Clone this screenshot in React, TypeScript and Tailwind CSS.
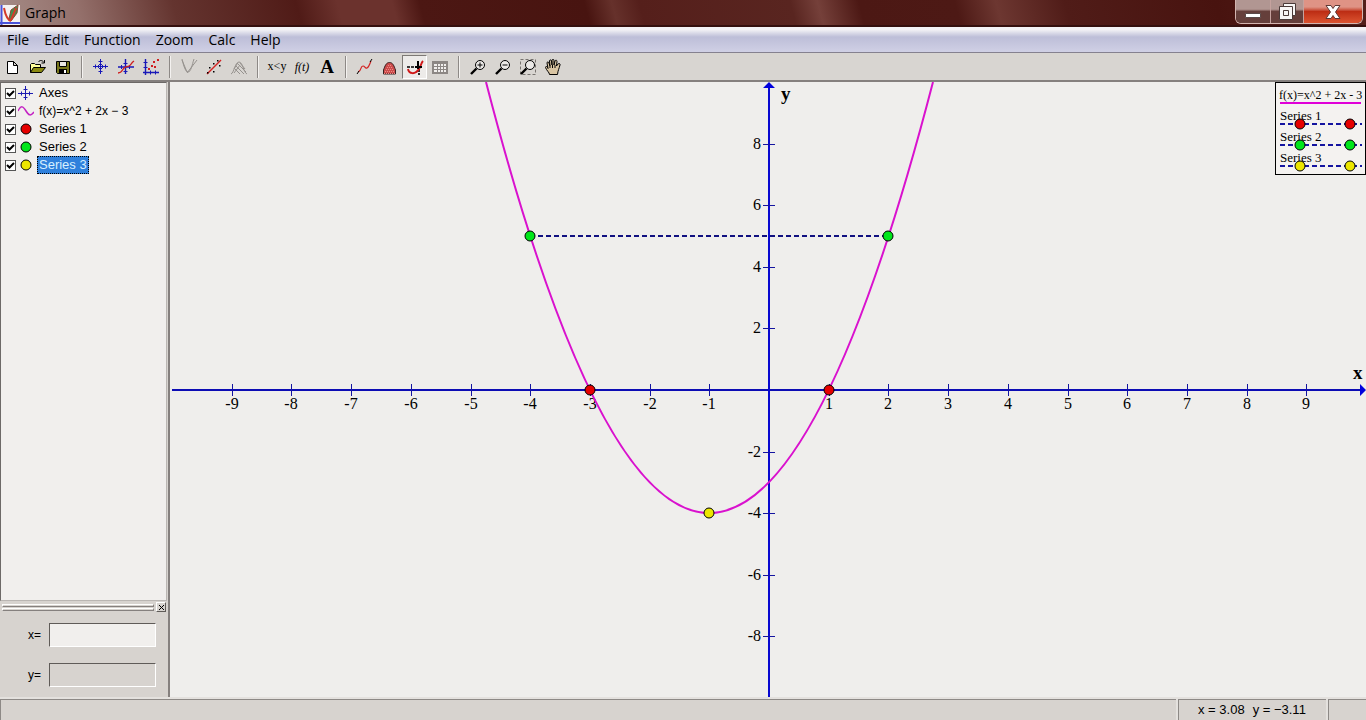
import type { ReactNode } from "react";

const MENUS = ["File", "Edit", "Function", "Zoom", "Calc", "Help"];

const POINT_COLORS = ["#e60000", "#00e61a", "#ece600"];

// ---- plot coordinates ----
const px = (x: number) => Math.round(598 + x * 59.7);
const py = (y: number) => Math.round(308 - y * 30.8);

const X_TICKS = [-9, -8, -7, -6, -5, -4, -3, -2, -1, 1, 2, 3, 4, 5, 6, 7, 8, 9];
const Y_TICKS = [-8, -6, -4, -2, 2, 4, 6, 8];

function Icon({ children }: { children: ReactNode }) {
  return (
    <svg width="18" height="18" viewBox="0 0 18 18" fill="none" stroke="black" className="overflow-visible" aria-hidden="true">
      {children}
    </svg>
  );
}

function Tool({ label, pressed, children }: { label: string; pressed?: boolean; children: ReactNode }) {
  return (
    <button
      aria-label={label}
      aria-pressed={pressed}
      className={
        pressed
          ? "flex h-6 w-[25px] items-center justify-center border border-t-[#7d7975] border-l-[#7d7975] border-r-white border-b-white bg-[#edebe9]"
          : "flex h-6 w-[25px] items-center justify-center"
      }
    >
      <Icon>{children}</Icon>
    </button>
  );
}

function Separator() {
  return (
    <div className="flex h-[22px] w-[13px] justify-center">
      <div className="w-0.5 border-l border-r border-l-[#8d8986] border-r-[#f4f2f0]" />
    </div>
  );
}

function Magnifier() {
  return (
    <>
      <circle cx="11" cy="7" r="4.5" fill="#eceae8" />
      <path d="M7.5 10.5 2 16" strokeWidth="2.4" />
    </>
  );
}

function Toolbar() {
  return (
    <div role="toolbar" className="flex h-[29px] items-center border-b-2 border-[#85807e] bg-[#d8d5d1]">
      <Tool label="New">
        <path d="M3.5 3.5h6l4 4v8h-10z M9.5 3.5v4h4" fill="white" />
      </Tool>
      <Tool label="Open">
        <path d="M1.5 14.5v-8l1-1h3l1 1h5v3" fill="#ffff9a" />
        <path d="M1.5 14.5l3-5h12l-4 5z" fill="#8b8a12" />
        <path d="M9.5 4c1-2 4-2 5.5.5M15.5 2v3h-3" />
      </Tool>
      <Tool label="Save">
        <path d="M2.5 3.5h13v12h-12l-1-1z" fill="#77761b" />
        <path d="M5.5 3.5h7v5h-7z" fill="#e9e7e4" />
        <path d="M5 11h8v4.500H5z" fill="black" stroke="none" />
        <path d="M10 12h2v3h-2z" fill="white" stroke="none" />
      </Tool>
      <Separator />
      <Tool label="Edit axes">
        <g stroke="#1818b8">
          <path d="M8.5 1v15M1 8.5h15" />
          <path d="M6.500 3.5h4M6.500 13.5h4M3.5 6.500v4M13.5 6.500v4M7 6.500h3M7 10.500h3M6.500 7v3M10.500 7v3" />
        </g>
      </Tool>
      <Tool label="Insert function">
        <g stroke="#1818b8">
          <path d="M8.5 1v15M1 9h16" strokeWidth="1.4" />
          <path d="M4.5 7v4M12.5 7v4M6.5 5.5h4M6.5 13.5h4" />
        </g>
        <path d="M1 15c4 0 4-3 6-5s3-1 5-2 2-3 5-5" stroke="#cf1e1e" strokeWidth="1.3" />
      </Tool>
      <Tool label="Insert point series">
        <path d="M3.500 1v16M1 14.500h16" stroke="#1818b8" strokeWidth="1.400" />
        <path d="M1.500 4.500h4M1.500 9.500h4M8.500 12.500v4M13.500 12.500v4" stroke="#1818b8" />
        <path d="M6 10h2v2H6zM9 7h2v2H9zM12 8h2v2h-2zM11 3h2v2h-2zM15 1h2v2h-2z" fill="#cf1e1e" stroke="none" />
      </Tool>
      <Separator />
      <Tool label="Insert tangent">
        <path d="M2 1c1 4 3 13 6 13s4-7 6-13M7 15 17 2M2 2l5 12" stroke="#96928e" />
      </Tool>
      <Tool label="Insert trendline">
        <path d="M2 16 16 2" stroke="#d32222" strokeWidth="1.4" />
        <path d="M4 9h1.500v1.500H4zM8 5h1.500v1.500H8zM12 2h1.500v1.500H12zM8 13h1.500v1.500H8zM14 7h1.500v1.500H14zM2 14h1.500v1.500H2z" fill="black" stroke="none" />
      </Tool>
      <Tool label="Insert shading">
        <path d="M1 16c3-1 4-12 8-12s4 10 8 12M6 8l8 8M7 5l9 9M5 11l5 5M10 5l5 6M7 6l-3 5M10 7l-6 8" stroke="#96928e" />
      </Tool>
      <Separator />
      <Tool label="Insert relation">
        <text x="9" y="12" textAnchor="middle" className="fill-black stroke-none font-['Liberation_Serif',serif] text-[12px]">x&lt;y</text>
      </Tool>
      <Tool label="Insert parametric function">
        <text x="9" y="13" textAnchor="middle" className="fill-black stroke-none font-['Liberation_Serif',serif] text-[12px] italic">f(t)</text>
      </Tool>
      <Tool label="Insert label">
        <text x="9" y="15" textAnchor="middle" className="fill-black stroke-none font-['Liberation_Serif',serif] text-[19px] leading-4 font-bold">A</text>
      </Tool>
      <Separator />
      <Tool label="Path length">
        <path d="M2 14c4-1 2-6 5-6 2 0 2 3 4 2s3-5 4-7" stroke="#d32222" strokeWidth="1.200" />
        <path d="M1 16l2-3M14 4l2-3" />
      </Tool>
      <Tool label="Area">
        <path d="M2.5 16V12C4 8 5 4.500 8.500 4.500S13 8 14.500 12v4z" fill="#cc4b4b" stroke="#352020" />
        <path d="M3 15.500h11M4 13.500h10M5 11.500h8M6 9.500h6M7 7.500h4" stroke="#ec8b84" strokeDasharray="1 1" />
      </Tool>
      <Tool label="Evaluate" pressed>
        <path d="M1 9h9M13 11v6" strokeWidth="1.600" strokeDasharray="3 1" />
        <path d="M2 11c1 5 7 6 11 0 2-3 2-6 4-8" stroke="#d01818" strokeWidth="2" />
        <path d="M12 3v8M9 9h7" strokeWidth="2" />
      </Tool>
      <Tool label="Table">
        <path d="M1 3h16v13H1z" fill="#8c8784" stroke="none" />
        <path d="M3 6h3v2H3zM7 6h2v2H7zM10 6h2v2h-2zM13 6h2v2h-2zM3 9h3v2H3zM7 9h2v2H7zM10 9h2v2h-2zM13 9h2v2h-2zM3 12h3v2H3zM7 12h2v2H7zM10 12h2v2h-2zM13 12h2v2h-2z" fill="#f1efed" stroke="none" />
      </Tool>
      <Separator />
      <Tool label="Zoom in">
        <Magnifier />
        <path d="M8.500 7h5M11 4.500v5" />
      </Tool>
      <Tool label="Zoom out">
        <Magnifier />
        <path d="M8.500 7h5" />
      </Tool>
      <Tool label="Zoom window">
        <path d="M1.500 1.500h15v15h-15z" stroke="#77736f" strokeDasharray="3 2" />
        <Magnifier />
      </Tool>
      <Tool label="Move">
        <path
          d="M5.500 16.500c0-2-3-4-4-7 0-1.500 1.500-1.500 2.500 1L3 5c0-1.500 1.500-1.500 2 0l1 3-.5-5c0-1.500 2-1.500 2 0L8 7V2.500c0-1.500 2-1.500 2 0V7l1-4c.5-1.300 2-1 2 .5L12.500 8 14 6c1-1 2.500-.5 2 1-1 4-2 5-2.500 9.500z"
          fill="#d9c5a3"
        />
        <path d="M6 8v2M8.500 7v3M11 7v3" />
      </Tool>
    </div>
  );
}

function TitleBar() {
  return (
    <header className="flex h-[27px] items-start justify-between border-b-2 border-[#35100e] bg-[linear-gradient(75deg,#a58c87_0%,#94706b_6%,#64342f_13%,#501b17_22%,#6b322d_25%,#6b322d_29%,#4c1713_31%,#481410_43%,#66312b_45%,#551f1b_47%,#592520_58%,#75403a_60%,#4c1814_63%,#4d1915_70%,#6d3731_73%,#501c18_78%,#48130f_89%,#54201b_100%)] pr-[3px]">
      <div className="flex items-center gap-[5px]">
        <svg width="20" height="23" viewBox="0 0 20 23" aria-hidden="true">
          <path d="M0 3h20v20H0z" fill="#f5f2f1" />
          <path d="M1.500 3v20M0 21h20" stroke="#4a52d8" strokeWidth="2" />
          <path d="M9 17 11 8l7-5-1 8-6 8z" fill="#3d9150" stroke="#8b4432" />
          <path d="M11 18 16 6M4 6c1 5 3 12 7 13" stroke="#d43a2b" strokeWidth="2" fill="none" />
        </svg>
        <h1 className="text-[14px] leading-[26px] text-black">Graph</h1>
      </div>
      <div className="flex h-6 overflow-hidden rounded-b-md border border-t-0 border-[#d3b5b0]">
        <button aria-label="Minimize" className="flex w-[35px] items-center justify-center border-r border-[#c5a29e] bg-linear-to-b from-[#b19692] from-40% to-[#653f3b] to-50%">
          <svg width="18" height="18" viewBox="0 0 18 18">
            <path d="M1.500 10.500h15v4h-15z" fill="white" stroke="#5a4a49" />
          </svg>
        </button>
        <button aria-label="Restore" className="flex w-[33px] items-center justify-center border-r border-[#c5a29e] bg-linear-to-b from-[#b19692] from-40% to-[#653f3b] to-50%">
          <svg width="18" height="18" viewBox="0 0 18 18" fill="#f7f5f5" stroke="#4a3a39">
            <path d="M5.500.5h12v12h-12z" />
            <path fillRule="evenodd" d="M1.500 3.500h13v13h-13zM5.500 7.500v5h5v-5z" />
          </svg>
        </button>
        <button aria-label="Close" className="flex w-[58px] items-center justify-center bg-linear-to-b from-[#df9385] from-30% via-[#bd2d14] via-50% to-[#dc5330]">
          <svg width="18" height="16" viewBox="0 0 18 16">
            <path d="M2 1.500h5L9 4.500l2-3h5L11.500 8l4.500 6.500h-5L9 11.500l-2 3H2L6.500 8z" fill="white" stroke="#5d3935" />
          </svg>
        </button>
      </div>
    </header>
  );
}

function AxesIcon() {
  return (
    <svg width="16" height="16" viewBox="0 0 16 16" stroke="#1c1cb0" fill="none">
      <path d="M7.500 1v14M0 8.500h15" />
      <path d="M5.500 4.500h4M5.500 12.500h4M3.500 6.500v4M11.500 6.500v4" />
    </svg>
  );
}

function CurveIcon() {
  return (
    <svg width="16" height="16" viewBox="0 0 16 16">
      <path d="M0 8C3 2 5 3 8 8s5 5 8 1" stroke="#c321c3" strokeWidth="1.500" fill="none" />
    </svg>
  );
}

function PointIcon({ color }: { color: string }) {
  return (
    <svg width="16" height="16" viewBox="0 0 16 16">
      <circle cx="8" cy="8" r="5" fill={color} stroke="black" />
    </svg>
  );
}

const ITEMS = [
  { label: "Axes", icon: <AxesIcon /> },
  { label: "f(x)=x^2 + 2x − 3", icon: <CurveIcon />, small: true },
  { label: "Series 1", icon: <PointIcon color={POINT_COLORS[0]} /> },
  { label: "Series 2", icon: <PointIcon color={POINT_COLORS[1]} /> },
  { label: "Series 3", icon: <PointIcon color={POINT_COLORS[2]} />, selected: true },
];

function Sidebar() {
  return (
    <aside className="flex w-[170px] shrink-0 flex-col border-r-2 border-[#85807e] bg-[#d7d3cf] font-['Liberation_Sans',Arial,sans-serif] text-[13px]">
      <ul className="mr-px flex-1 border border-t-[#6d6967] border-l-[#6d6967] border-r-[#bab6b3] border-b-[#bab6b3] bg-[#f1efed] pt-px">
        {ITEMS.map((item) => (
          <li key={item.label} className={item.small ? "text-[12px]" : undefined}>
            <label className="flex h-[18px] items-center pl-1">
              <span className="grid size-[11px] place-items-center">
                <input type="checkbox" defaultChecked className="peer col-start-1 row-start-1 size-[11px] appearance-none border border-[#555] bg-white" />
                <svg className="pointer-events-none invisible col-start-1 row-start-1 peer-checked:visible" width="9" height="9" viewBox="0 0 9 9">
                  <path d="M1 4 3.500 6.500 8 2" stroke="black" strokeWidth="2" fill="none" />
                </svg>
              </span>
              <span className="ml-0.5">{item.icon}</span>
              <span
                className={
                  item.selected
                    ? "ml-[3px] border border-dotted border-black bg-[#2f80dc] px-px leading-4 text-[#d8f0ff]"
                    : "ml-[5px] whitespace-nowrap leading-[18px]"
                }
              >
                {item.label}
              </span>
            </label>
          </li>
        ))}
      </ul>
      <div className="flex h-3 items-center gap-0.5 pr-0.5 pl-0.5">
        <div className="flex flex-1 flex-col gap-px">
          <div className="h-[3px] border border-t-white border-l-white border-r-[#85807e] border-b-[#85807e]" />
          <div className="h-[3px] border border-t-white border-l-white border-r-[#85807e] border-b-[#85807e]" />
        </div>
        <button aria-label="Close panel" className="flex size-[10px] items-center justify-center border border-t-white border-l-white border-r-[#5f5b58] border-b-[#5f5b58]">
          <svg width="7" height="7" viewBox="0 0 7 7">
            <path d="M1 1l5 5M6 1 1 6" stroke="black" />
          </svg>
        </button>
      </div>
      <div className="flex flex-col gap-4 px-3 pt-2.5 pb-2.5 text-[12px]">
        <label className="flex items-center">
          <span className="w-[37px] pl-4">x=</span>
          <input className="h-6 min-w-0 flex-1 border border-t-[#5f5b58] border-l-[#5f5b58] border-r-white border-b-white bg-[#f1efed] px-1 outline-none" />
        </label>
        <label className="flex items-center">
          <span className="w-[37px] pl-4">y=</span>
          <input readOnly className="h-6 min-w-0 flex-1 border border-t-[#5f5b58] border-l-[#5f5b58] border-r-white border-b-white bg-[#d7d3cf] px-1 outline-none" />
        </label>
      </div>
    </aside>
  );
}

function Point({ x, y, color }: { x: number; y: number; color: string }) {
  return <circle cx={x} cy={y} r="5" fill={color} stroke="black" />;
}

function Legend() {
  return (
    <g className="font-['Liberation_Serif',serif] text-[13px]">
      <rect x="1104.5" y="0.5" width="90" height="92" fill="#f4f2f0" stroke="black" />
      <text x="1108" y="17" className="text-[12px]">f(x)=x^2 + 2x - 3</text>
      <path d="M1109 21h81" stroke="#e000d8" strokeWidth="2" />
      {POINT_COLORS.map((color, i) => (
        <g key={color}>
          <text x="1109" y={38 + i * 21}>Series {i + 1}</text>
          <path d={`M1109 ${42 + i * 21}h82`} stroke="#1414a0" strokeWidth="2" strokeDasharray="5 3" />
          <Point x={1129} y={42 + i * 21} color={color} />
          <Point x={1179} y={42 + i * 21} color={color} />
        </g>
      ))}
    </g>
  );
}

function Plot() {
  const root = Math.sqrt(14);
  return (
    <main className="min-w-0 flex-1 bg-[#efeeec]">
      <svg viewBox="0 0 1195 615" preserveAspectRatio="xMaxYMid" className="h-full w-full font-['Liberation_Serif',serif] text-[16px]">
        <title>f(x)=x^2 + 2x - 3</title>
        <g stroke="#0c0cb4" strokeWidth="2">
          <path d={`M1 ${py(0)}H1190`} />
          <path d={`M${px(0)} 5V615`} stroke="#0808d0" />
        </g>
        <path d={`M1195 ${py(0)}l-6-6v12z M${px(0)} 0l-6 6h12z`} fill="#0000dc" />
        {X_TICKS.map((x) => (
          <g key={x}>
            <path d={`M${px(x) + 0.5} ${py(0) - 6}v12`} stroke="#1414a0" />
            <text x={px(x)} y={py(0) + 19} textAnchor="middle">{x}</text>
          </g>
        ))}
        {Y_TICKS.map((y) => (
          <g key={y}>
            <path d={`M${px(0) - 6} ${py(y) + 0.5}h12`} stroke="#1414a0" />
            <text x={px(0) - 8} y={py(y) + 5} textAnchor="end">{y}</text>
          </g>
        ))}
        <text x={px(0) + 12} y="18" className="text-[19px] font-bold">y</text>
        <text x="1182" y="297" className="text-[19px] font-bold">x</text>
        <path
          d={`M${px(-1 - root)} ${py(10)}Q${px(-1)} ${py(-18)} ${px(-1 + root)} ${py(10)}`}
          fill="none"
          stroke="#d911ce"
          strokeWidth="2"
        />
        <path d={`M${px(-4)} ${py(5)}H${px(2)}`} stroke="#101080" strokeWidth="2" strokeDasharray="5 3" />
        <Point x={px(-3)} y={py(0)} color={POINT_COLORS[0]} />
        <Point x={px(1)} y={py(0)} color={POINT_COLORS[0]} />
        <Point x={px(-4)} y={py(5)} color={POINT_COLORS[1]} />
        <Point x={px(2)} y={py(5)} color={POINT_COLORS[1]} />
        <Point x={px(-1)} y={py(-4)} color={POINT_COLORS[2]} />
        <Legend />
      </svg>
    </main>
  );
}

function StatusBar() {
  return (
    <footer className="flex h-[23px] gap-0.5 border-t-2 border-[#e4e1de] bg-[#e4e1de] font-['Liberation_Sans',Arial,sans-serif] text-[13px] leading-5">
      <div className="flex-1 border-t border-l border-[#8d8986] bg-[#d7d3cf]" />
      <div className="flex w-[148px] gap-2 border-t border-l border-[#8d8986] bg-[#d7d3cf] pl-[19px] whitespace-nowrap">
        <span>x = 3.08</span>
        <span>y = −3.11</span>
      </div>
      <div className="w-[38px] border-t border-l border-[#8d8986] bg-[#d7d3cf]" />
    </footer>
  );
}

export default function App() {
  return (
    <div className="flex h-screen flex-col overflow-hidden bg-[#d7d3cf] font-['Open_Sans',sans-serif] text-black">
      <TitleBar />
      <nav className="flex h-[26px] items-center gap-px border-b border-[#85818f] bg-linear-to-b from-[#f4f3f6] from-10% via-[#bdbed8] via-40% to-[#d0d0e5]">
        {MENUS.map((menu) => (
          <button key={menu} className="px-[7px] text-[14px] leading-6">
            {menu}
          </button>
        ))}
      </nav>
      <Toolbar />
      <div className="flex min-h-0 flex-1">
        <Sidebar />
        <Plot />
      </div>
      <StatusBar />
    </div>
  );
}
